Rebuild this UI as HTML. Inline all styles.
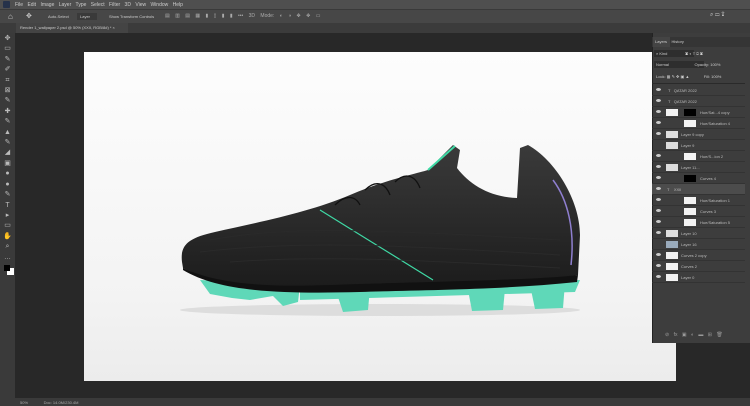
<!DOCTYPE html><html><head><style>
body{margin:0;width:750px;height:406px;overflow:hidden;background:#282828;font-family:"Liberation Sans",sans-serif;position:relative}
div{position:absolute;box-sizing:border-box}
.t{font-size:5px;color:#ccc;white-space:nowrap}
.row{left:652px;width:93px;height:11px;border-bottom:1px solid #333;font-size:4px;color:#bbb}
.row .e{position:absolute;left:4px;top:3px;width:5px;height:3px;border-radius:50%;background:#ccc}
.row .th{position:absolute;left:14px;top:2px;width:12px;height:7px;background:#f2f2f2}
.row .n{position:absolute;left:29px;top:3px}
</style></head><body>
<div style="left:0;top:0;width:750px;height:9px;background:#4f4f4f"></div>
<div class="t" style="left:3px;top:1px;width:7px;height:7px;background:#26324a;border-radius:1px"></div>
<div class="t" style="left:15px;top:2px;word-spacing:3px">File Edit Image Layer Type Select Filter 3D View Window Help</div>
<div style="left:0;top:9px;width:750px;height:14px;background:#474747;border-top:1px solid #3a3a3a"></div>
<div class="t" style="left:8px;top:12px;font-size:8px">⌂</div>
<div class="t" style="left:26px;top:12px;font-size:7px">✥</div>
<div class="t" style="left:48px;top:14px;font-size:4px">Auto-Select</div>
<div style="left:77px;top:13px;width:20px;height:7px;background:#3a3a3a"></div>
<div class="t" style="left:80px;top:14px;font-size:4px">Layer</div>
<div class="t" style="left:109px;top:14px;font-size:4px">Show Transform Controls</div>
<div class="t" style="left:165px;top:13px;font-size:5px;word-spacing:4px;color:#aaa">▤ ▥ ▤ ▦ ▮ ▯ ▮ ▮ ••• 3D Mode: ◐ ◑ ✥ ✥ ▭</div>
<div class="t" style="left:710px;top:12px;font-size:6px">⌕ ▭ ⇪</div>
<div style="left:0;top:23px;width:750px;height:10px;background:#3b3b3b"></div>
<div style="left:16px;top:23px;width:112px;height:10px;background:#444"></div>
<div class="t" style="left:20px;top:25px;font-size:4px">Render 1_wallpaper 2.psd @ 50% (XXII, RGB/8#) * ×</div>
<div style="left:0;top:33px;width:15px;height:373px;background:#3a3a3a"></div>
<div class="t" style="left:3px;top:34px;font-size:7px;line-height:10.4px;color:#bbb;text-align:center;width:9px">✥<br>▭<br>✎<br>✐<br>⌗<br>⊠<br>✎<br>✚<br>✎<br>▲<br>✎<br>◢<br>▣<br>●<br>●<br>✎<br>T<br>▸<br>▭<br>✋<br>⌕<br>…</div>
<div style="left:7px;top:268px;width:7px;height:7px;background:#fff"></div>
<div style="left:4px;top:265px;width:6px;height:6px;background:#000"></div>
<div style="left:84px;top:52px;width:592px;height:329px;background:linear-gradient(#fdfdfd,#f3f3f3 75%,#ececec)"></div>
<svg style="position:absolute;left:0;top:0" width="750" height="406">
<defs><linearGradient id="g" x1="0" y1="0" x2="0" y2="1"><stop offset="0" stop-color="#3a3a3a"/><stop offset="1" stop-color="#1c1c1c"/></linearGradient></defs>
<ellipse cx="380" cy="310" rx="200" ry="6" fill="#ddd"/>
<g fill="#5fd8b8">
<path d="M200 280 L300 285 L298 302 L283 306 L273 296 L250 300 L232 298 L210 294 Z"/>
<path d="M335 288 L370 288 L368 310 L343 312 Z"/>
<path d="M300 290 L580 280 L575 292 L300 300 Z"/>
<path d="M468 290 L505 289 L503 310 L472 311 Z"/>
<path d="M530 285 L565 283 L563 308 L535 309 Z"/>
</g>
<path d="M182 262 C180 245 188 238 215 232 C260 222 310 212 350 195 C385 180 415 174 428 170 L453 145 L460 150 L457 168 C470 185 490 197 517 198 L520 148 L528 145 C555 160 580 200 580 235 L578 275 C540 282 420 283 360 285 C300 287 230 292 183 268 Z" fill="url(#g)"/>
<path d="M183 268 C230 290 300 286 360 284 C420 282 540 280 578 275 L577 282 C500 290 420 290 360 292 C280 294 220 292 183 270 Z" fill="#111"/>
<path d="M320 210 L433 280" stroke="#3fd9a5" stroke-width="1.2" fill="none"/>
<path d="M428 170 L455 146" stroke="#3fd9a5" stroke-width="2" fill="none"/>
<path d="M553 180 C568 200 575 230 571 265" stroke="#8f7fd0" stroke-width="1.5" fill="none"/>
<g stroke="#111" stroke-width="1.3" fill="none"><path d="M335 205 C345 195 355 195 360 205"/><path d="M365 190 C375 180 385 182 390 195"/><path d="M395 182 C405 172 415 175 420 188"/></g>
<g stroke="#2a2a2a" stroke-width="1" fill="none"><path d="M210 240 C290 225 380 230 560 240"/><path d="M200 252 C300 240 400 245 560 255"/><path d="M230 262 C320 255 420 260 560 268"/></g>
</svg>
<div style="left:0;top:398px;width:750px;height:8px;background:#3a3a3a"></div>
<div class="t" style="left:20px;top:400px;font-size:4px;color:#aaa">50% &nbsp;&nbsp;&nbsp;&nbsp;&nbsp;&nbsp;&nbsp;&nbsp;&nbsp;&nbsp;&nbsp;&nbsp; Doc: 14.0M/230.4M</div>
<div style="left:652px;top:33px;width:98px;height:310px;background:#3d3d3d;border-left:1px solid #222"></div>
<div style="left:652px;top:37px;width:98px;height:10px;background:#353535"></div>
<div style="left:653px;top:37px;width:17px;height:10px;background:#444"></div>
<div class="t" style="left:655px;top:39px;font-size:4px">Layers &nbsp;&nbsp;&nbsp;History</div>
<div style="left:654px;top:50px;width:40px;height:7px;background:#2e2e2e"></div>
<div class="t" style="left:656px;top:51px;font-size:4px">⌕ Kind &nbsp;&nbsp;&nbsp;&nbsp;&nbsp;&nbsp;&nbsp;&nbsp;&nbsp;&nbsp;&nbsp;&nbsp;&nbsp;&nbsp; ▣ ◐ T ⊡ ▣</div>
<div style="left:654px;top:61px;width:50px;height:7px;background:#2e2e2e"></div>
<div class="t" style="left:656px;top:62px;font-size:4px">Normal &nbsp;&nbsp;&nbsp;&nbsp;&nbsp;&nbsp;&nbsp;&nbsp;&nbsp;&nbsp;&nbsp;&nbsp;&nbsp;&nbsp;&nbsp;&nbsp;&nbsp;&nbsp;&nbsp;&nbsp;&nbsp; Opacity: 100%</div>
<div class="t" style="left:656px;top:74px;font-size:4px">Lock: ▦ ✎ ✥ ▣ ▲ &nbsp;&nbsp;&nbsp;&nbsp;&nbsp;&nbsp;&nbsp;&nbsp;&nbsp;&nbsp;&nbsp; Fill: 100%</div>
<div style="left:652px;top:83px;width:93px;height:1px;background:#2a2a2a"></div>
<div class="row" style="top:85px"><i class="e"></i><span class="n" style="left:16px">T &nbsp;&nbsp;QATAR 2022</span></div>
<div class="row" style="top:96px"><i class="e"></i><span class="n" style="left:16px">T &nbsp;&nbsp;QATAR 2022</span></div>
<div class="row" style="top:107px"><i class="e"></i><i class="th"></i><span class="n" style="left:32px;top:2px;width:12px;height:7px;background:#000"></span><span class="n" style="left:48px">Hue/Sat...4 copy</span></div>
<div class="row" style="top:118px"><i class="e"></i><i class="th" style="left:32px"></i><span class="n" style="left:48px">Hue/Saturation 4</span></div>
<div class="row" style="top:129px"><i class="e"></i><i class="th" style="background:#ddd"></i><span class="n">Layer 9 copy</span></div>
<div class="row" style="top:140px"><i class="th" style="background:#ddd"></i><span class="n">Layer 9</span></div>
<div class="row" style="top:151px"><i class="e"></i><i class="th" style="left:32px"></i><span class="n" style="left:48px">Hue/S...ion 2</span></div>
<div class="row" style="top:162px"><i class="e"></i><i class="th" style="background:#ddd"></i><span class="n">Layer 11...</span></div>
<div class="row" style="top:173px"><i class="e"></i><i class="th" style="left:32px;background:#000"></i><span class="n" style="left:48px">Curves 4</span></div>
<div class="row" style="top:184px;background:#4c4c4c"><i class="e"></i><span class="n" style="left:15px">T &nbsp;&nbsp;&nbsp;XXII</span></div>
<div class="row" style="top:195px"><i class="e"></i><i class="th" style="left:32px"></i><span class="n" style="left:48px">Hue/Saturation 1</span></div>
<div class="row" style="top:206px"><i class="e"></i><i class="th" style="left:32px"></i><span class="n" style="left:48px">Curves 3</span></div>
<div class="row" style="top:217px"><i class="e"></i><i class="th" style="left:32px"></i><span class="n" style="left:48px">Hue/Saturation 5</span></div>
<div class="row" style="top:228px"><i class="e"></i><i class="th" style="background:#ddd"></i><span class="n">Layer 10</span></div>
<div class="row" style="top:239px"><i class="th" style="background:#9ab"></i><span class="n">Layer 16</span></div>
<div class="row" style="top:250px"><i class="e"></i><i class="th"></i><span class="n">Curves 2 copy</span></div>
<div class="row" style="top:261px"><i class="e"></i><i class="th"></i><span class="n">Curves 2</span></div>
<div class="row" style="top:272px"><i class="e"></i><i class="th"></i><span class="n">Layer 0</span></div>
<div class="t" style="left:665px;top:332px;font-size:5px;color:#999;word-spacing:3px">⊘ fx ▣ ◐ ▬ ⊞ 🗑</div>
</body></html>
